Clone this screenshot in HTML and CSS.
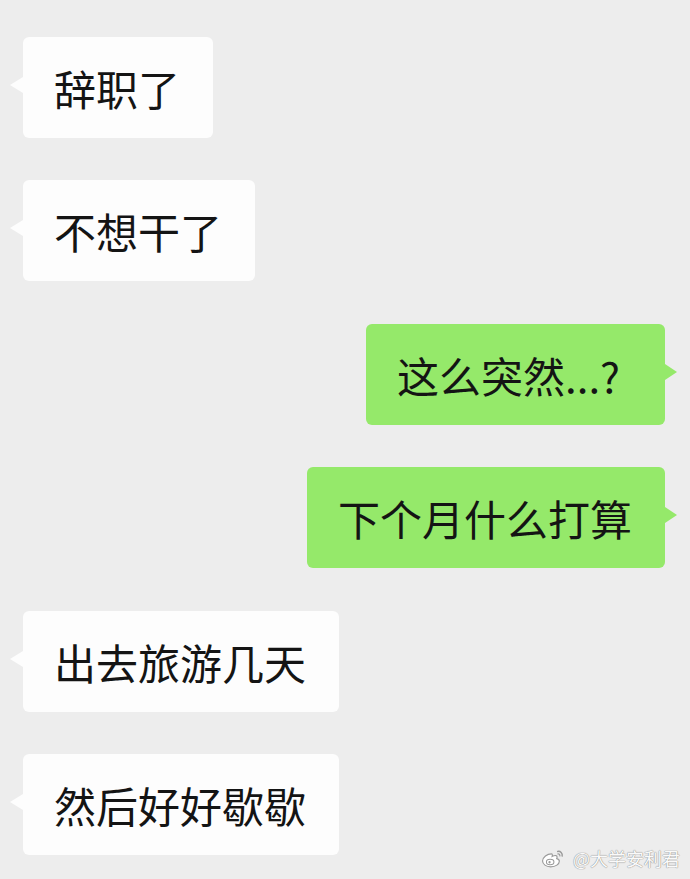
FILE: index.html
```html
<!DOCTYPE html>
<html lang="zh-CN">
<head>
<meta charset="utf-8">
<title>聊天</title>
<link rel="stylesheet" href="styles.css">
</head>
<body>
<div class="chat">
  <div class="row left"><div class="bubble white">辞职了</div></div>
  <div class="row left"><div class="bubble white">不想干了</div></div>
  <div class="row right"><div class="bubble green trail">这么突然...?</div></div>
  <div class="row right"><div class="bubble green">下个月什么打算</div></div>
  <div class="row left"><div class="bubble white">出去旅游几天</div></div>
  <div class="row left"><div class="bubble white">然后好好歇歇</div></div>
</div>
<div class="watermark">
  <svg class="weibo" viewBox="0 0 24 20" width="25" height="21">
    <path d="M10 5.5c-4 0-8.5 3.2-8.5 7 0 3 3.4 5.5 7.8 5.5 4.8 0 8.3-2.6 8.3-5.3 0-1.7-1.5-2.4-2.5-2.6.6-1.3.5-2.6-.8-2.9-1.2-.3-2.9.5-3.6.8.4-1.3.2-2.5-.7-2.5z" fill="#fff" stroke="#9a9a9a" stroke-width="1.1"/>
    <ellipse cx="8.8" cy="13.3" rx="3.6" ry="2.6" fill="#fff" stroke="#9a9a9a" stroke-width="1"/>
    <circle cx="8.2" cy="13.6" r="1.1" fill="#9a9a9a"/>
    <path d="M16 3.2c2.6-.5 4.9 1.6 4.3 4.4" fill="none" stroke="#9a9a9a" stroke-width="1.4" stroke-linecap="round"/>
    <path d="M16.3 5.6c1.1-.2 2 .7 1.8 1.8" fill="none" stroke="#9a9a9a" stroke-width="1.2" stroke-linecap="round"/>
  </svg>
  <span class="wm-text">@大学安利君</span>
</div>
</body>
</html>
```
FILE: styles.css
```css
html, body {
  margin: 0;
  padding: 0;
}
body {
  background: #ededed;
  width: 690px;
  height: 879px;
  overflow: hidden;
  position: relative;
  font-family: "Noto Sans CJK SC", "Noto Sans", sans-serif;
}
.chat {
  display: flex;
  flex-direction: column;
  gap: 42.4px;
  padding: 37px 25px 0 23px;
}
.row {
  display: flex;
}
.row.left { justify-content: flex-start; }
.row.right { justify-content: flex-end; }
.bubble {
  position: relative;
  font-size: 42px;
  line-height: 57px;
  height: 57px;
  padding: 22px 33px 22px 31px;
  color: #141414;
  border-radius: 6px;
  white-space: nowrap;
}
.bubble.trail { padding-right: 45px; }
.bubble.white { background: #fdfdfd; }
.bubble.green { background: #95e96a; }
.bubble.white::before {
  content: "";
  position: absolute;
  left: -13px;
  top: 40px;
  border-style: solid;
  border-width: 8px 13px 8px 0;
  border-color: transparent #fdfdfd transparent transparent;
}
.bubble.green::after {
  content: "";
  position: absolute;
  right: -12px;
  top: 40px;
  border-style: solid;
  border-width: 8px 0 8px 12px;
  border-color: transparent transparent transparent #95e96a;
}
.watermark {
  position: absolute;
  right: 10px;
  bottom: 8px;
  display: flex;
  align-items: center;
  gap: 7px;
}
.wm-text {
  font-family: "Noto Sans CJK SC", sans-serif;
  font-size: 18px;
  color: #fafafa;
  text-shadow: 0 0 1px #8a8a8a, 0 0 1px #8a8a8a;
}
```
